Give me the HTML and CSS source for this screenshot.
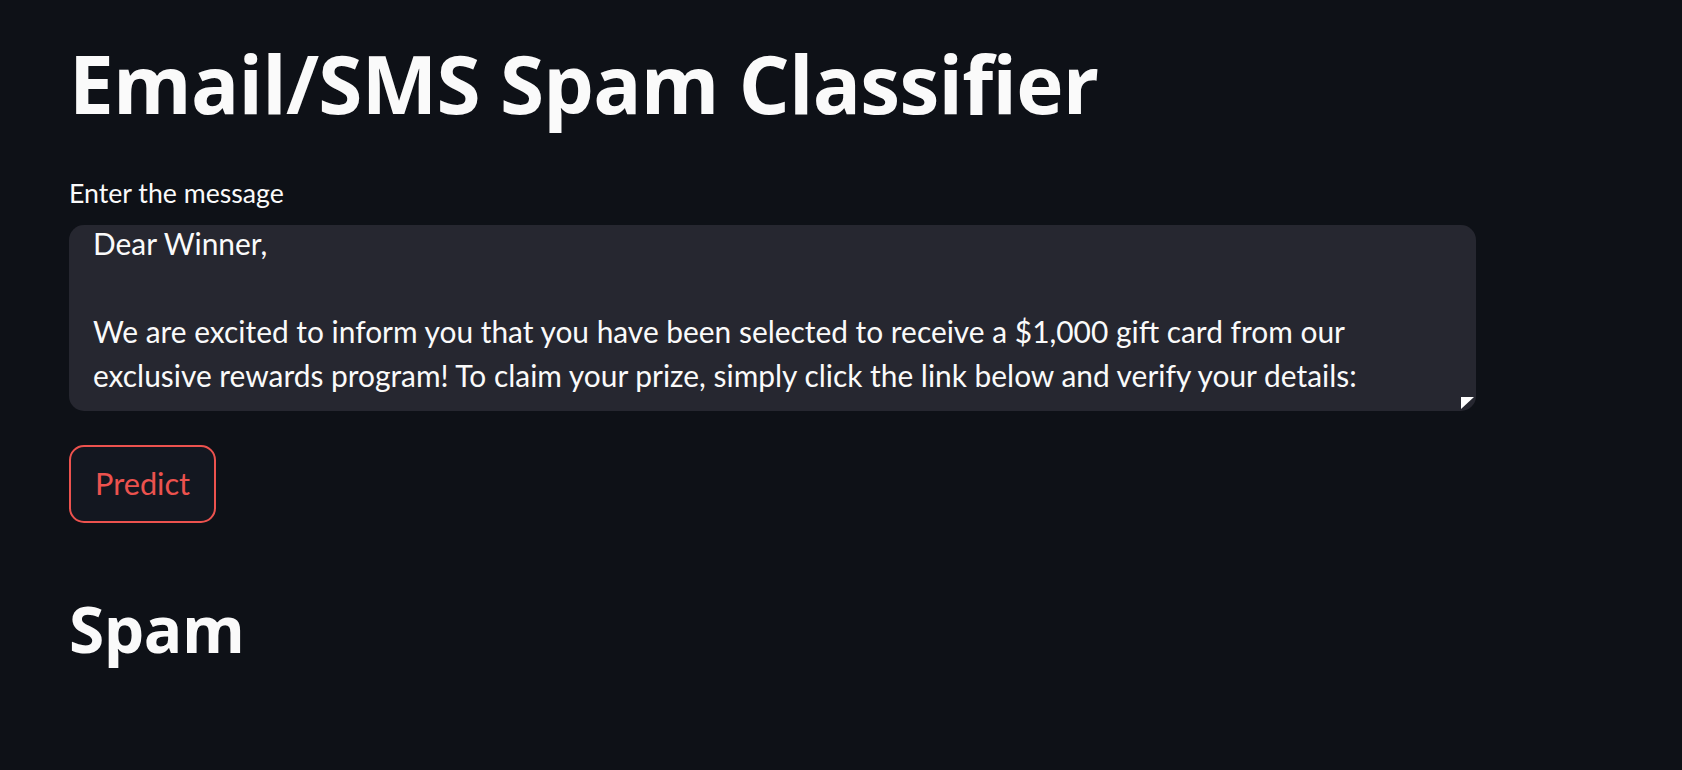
FILE: index.html
```html
<!DOCTYPE html>
<html lang="en">
<head>
<meta charset="utf-8">
<title>Email/SMS Spam Classifier</title>
<link rel="stylesheet" href="styles.css">
</head>
<body>
<main class="main">
  <h1 class="title">Email/SMS Spam Classifier</h1>
  <label class="label" for="msg">Enter the message</label>
  <div class="textarea" id="msg">
    <div class="textarea-text">Dear Winner,<br><br>We are excited to inform you that you have been selected to receive a $1,000 gift card from our exclusive rewards program! To claim your prize, simply click the link below and verify your details:</div>
    <svg class="resize" width="13" height="12" viewBox="0 0 13 12"><polygon points="0,0 13,0 0,12" fill="#ffffff"/></svg>
  </div>
  <div class="actions"><button class="btn">Predict</button></div>
  <h2 class="result">Spam</h2>
</main>
</body>
</html>
```
FILE: styles.css
```css
html, body {
  margin: 0;
  padding: 0;
  background: #0e1117;
  color: #fafafa;
  font-family: Lato, "Source Sans Pro", "Noto Sans", sans-serif;
}
.main {
  display: flex;
  flex-direction: column;
  align-items: flex-start;
  padding: 0 0 0 69px;
  width: 1407px;
}
.title {
  margin: 35px 0 0 0;
  font-family: "Open Sans", "Noto Sans", sans-serif;
  font-size: 80px;
  font-weight: 700;
  line-height: 1.2;
  letter-spacing: -0.7px;
}
.label {
  margin-top: 46px;
  font-size: 26.7px;
  line-height: 1.2;
  font-weight: 400;
}
.textarea {
  position: relative;
  margin-top: 16px;
  width: 100%;
  height: 186px;
  box-sizing: border-box;
  background: #262730;
  border-radius: 15px;
  overflow: hidden;
  padding: 0 24px;
}
.textarea-text {
  margin-top: -4px;
  font-size: 29.9px;
  line-height: 44px;
}
.resize {
  position: absolute;
  right: 2px;
  bottom: 2px;
}
.actions {
  margin-top: 34px;
}
.btn {
  display: flex;
  align-items: center;
  justify-content: center;
  box-sizing: border-box;
  height: 78px;
  padding: 0 24px;
  background: #131720;
  border: 2px solid #ec524e;
  border-radius: 15px;
  color: #ec524e;
  font-family: inherit;
  font-size: 30.7px;
  line-height: 1.2;
}
.result {
  margin: 68px 0 0 0;
  font-family: "Open Sans", "Noto Sans", sans-serif;
  font-size: 64px;
  font-weight: 700;
  line-height: 1.2;
  letter-spacing: -0.5px;
}
```
